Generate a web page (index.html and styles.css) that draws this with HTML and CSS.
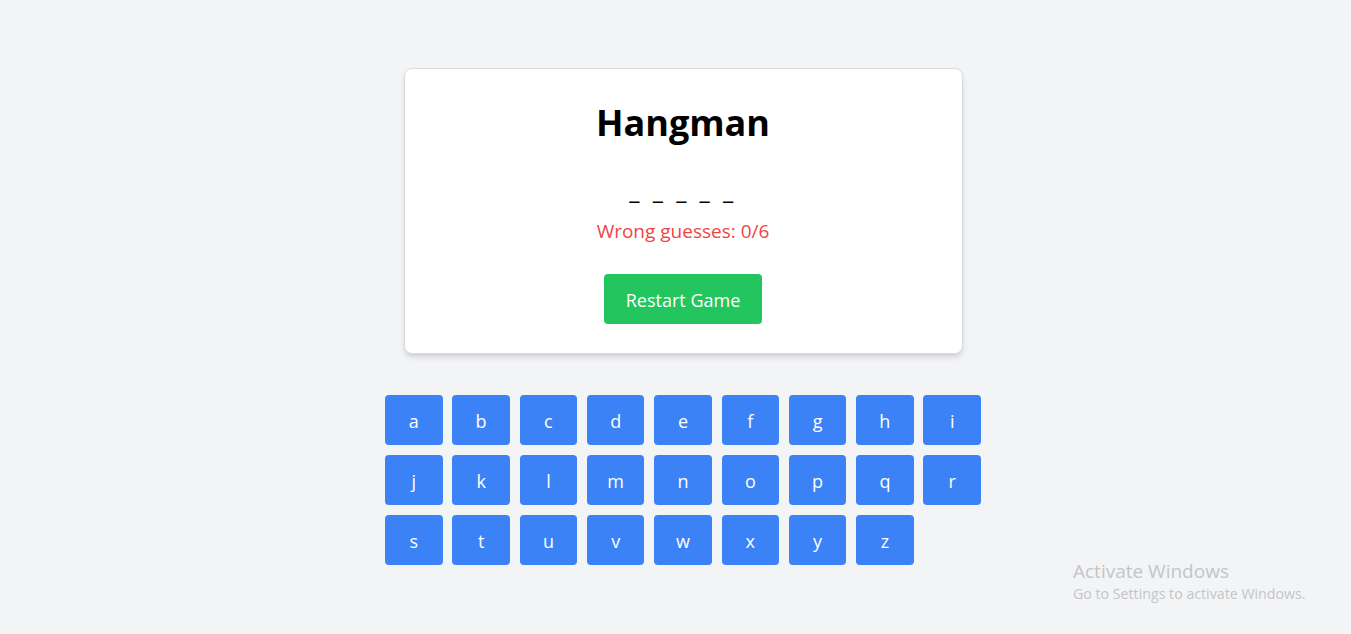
FILE: index.html
```html
<!DOCTYPE html>
<html lang="en">
<head>
<meta charset="utf-8">
<title>Hangman</title>
<link rel="stylesheet" href="styles.css">
</head>
<body>
<main class="page">
  <section class="card">
    <h1 class="title">Hangman</h1>
    <p class="word">_ _ _ _ _</p>
    <p class="wrong">Wrong guesses: 0/6</p>
    <button class="restart">Restart Game</button>
  </section>
  <div class="keyboard">
    <button class="key">a</button><button class="key">b</button><button class="key">c</button><button class="key">d</button><button class="key">e</button><button class="key">f</button><button class="key">g</button><button class="key">h</button><button class="key">i</button>
    <button class="key">j</button><button class="key">k</button><button class="key">l</button><button class="key">m</button><button class="key">n</button><button class="key">o</button><button class="key">p</button><button class="key">q</button><button class="key">r</button>
    <button class="key">s</button><button class="key">t</button><button class="key">u</button><button class="key">v</button><button class="key">w</button><button class="key">x</button><button class="key">y</button><button class="key">z</button>
  </div>
</main>
<div class="watermark">
  <div class="wm-title">Activate Windows</div>
  <div class="wm-sub">Go to Settings to activate Windows.</div>
</div>
</body>
</html>
```
FILE: styles.css
```css
* { box-sizing: border-box; }
html, body { margin: 0; padding: 0; }
body {
  background: #f3f4f6;
  font-family: "Open Sans", "Noto Sans", sans-serif;
  color: #000;
  min-height: 634px;
}
.page {
  display: flex;
  flex-direction: column;
  align-items: center;
  padding-top: 68px;
  padding-left: 15px;
}
.card {
  width: 559px;
  background: #fff;
  border: 1px solid #d9dbe0;
  border-radius: 8px;
  box-shadow: 0 4px 6px -1px rgba(0,0,0,0.12), 0 2px 4px -2px rgba(0,0,0,0.1);
  padding: 34px 32px 29px;
  display: flex;
  flex-direction: column;
  align-items: center;
}
.title {
  margin: 0;
  font-size: 36px;
  line-height: 40px;
  font-weight: 700;
}
.word {
  margin: 31px 0 0;
  font-size: 24px;
  line-height: 32px;
  letter-spacing: 3.5px;
  font-weight: 600;
}
.wrong {
  margin: 11px 0 0;
  font-size: 19px;
  line-height: 28px;
  color: #ef4444;
}
.restart {
  margin-top: 29px;
  width: 158px;
  height: 50px;
  border: none;
  border-radius: 4px;
  background: #22c55e;
  color: #fff;
  font-family: inherit;
  font-size: 18px;
  padding: 2px 0 0;
}
.keyboard {
  margin-top: 41px;
  display: grid;
  grid-template-columns: repeat(9, 57.5px);
  grid-auto-rows: 50px;
  column-gap: 9.8px;
  row-gap: 10px;
}
.key {
  border: none;
  border-radius: 4px;
  background: #3b82f6;
  color: #fff;
  font-family: inherit;
  font-size: 18px;
  padding: 2px 0 0;
}
.watermark {
  position: absolute;
  left: 1073px;
  top: 559px;
  color: #c3c5c8;
  font-family: "Open Sans", "Noto Sans", sans-serif;
}
.wm-title { font-size: 19px; line-height: 24px; }
.wm-sub { font-size: 14.2px; line-height: 20px; margin-top: 1px; }
```
